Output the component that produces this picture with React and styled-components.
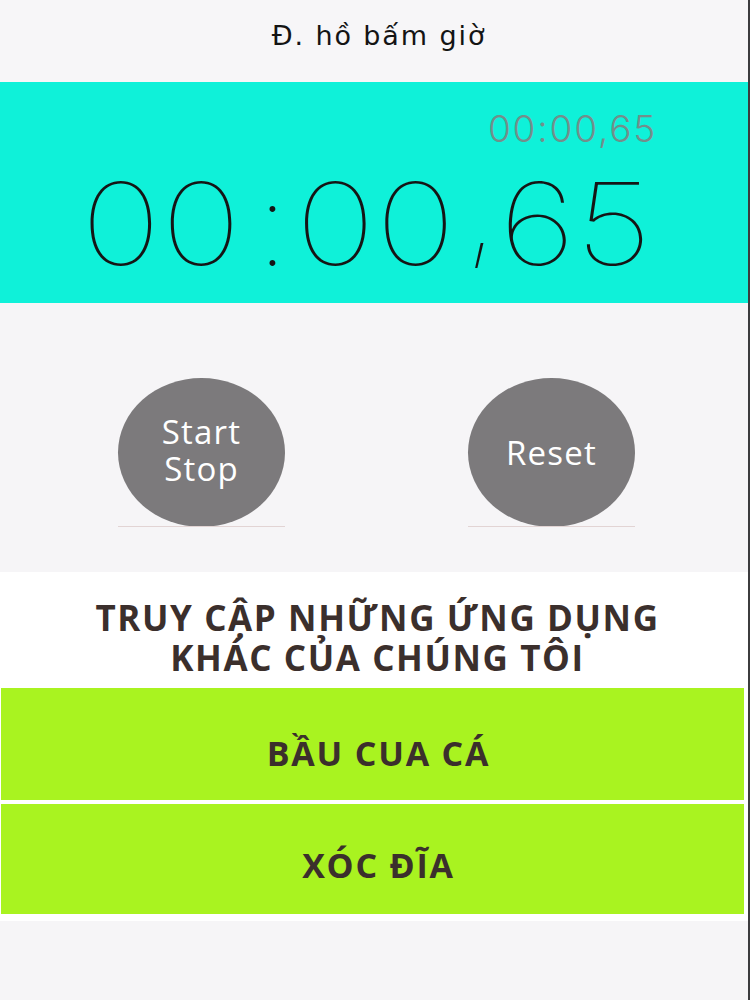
import styled, { createGlobalStyle } from "styled-components";

const GlobalStyle = createGlobalStyle`
  html, body {
    margin: 0;
    padding: 0;
    background: #f6f5f7;
  }
  body {
    font-family: "Open Sans", "Liberation Sans", sans-serif;
  }
`;

const Screen = styled.div`
  width: 750px;
  min-height: 1000px;
  box-sizing: border-box;
  border-right: 2px solid #3c3c3e;
  background: #f6f5f7;
  display: flex;
  flex-direction: column;
`;

const TopBar = styled.header`
  height: 82px;
  box-sizing: border-box;
  padding: 22px 0 0 10px;
  background: #f7f6f8;
  text-align: center;
`;

const Title = styled.h1`
  margin: 0;
  font-family: "DejaVu Sans", sans-serif;
  font-weight: 400;
  font-size: 27px;
  line-height: 1;
  letter-spacing: 1.9px;
  color: #141414;
`;

const TimerPanel = styled.section`
  height: 221px;
  box-sizing: border-box;
  padding: 28px 91px 0 0;
  background: #0ff1d9;
  display: flex;
  flex-direction: column;
`;

const LapTime = styled.div`
  align-self: flex-end;
  font-family: "Inter", "Roboto", sans-serif;
  font-weight: 300;
  font-size: 37px;
  line-height: 1;
  letter-spacing: 1.8px;
  color: #728f8b;
`;

const BigTime = styled.div`
  display: flex;
  align-items: baseline;
  margin-top: 20px;
  padding-left: 88px;
  font-family: "Inter", "Roboto", sans-serif;
  font-weight: 100;
  font-size: 114px;
  line-height: 1;
  color: #151515;
`;

/* the reference digits are wider than Inter's, so each group is stretched in its own box */
const Digits = styled.span`
  display: inline-block;
  width: ${(p) => p.$w}px;
  text-align: center;
  white-space: nowrap;
  transform: scaleX(1.19);
  transform-origin: center;
`;

const Sep = styled.span`
  display: inline-block;
  margin: 0 ${(p) => p.$after}px 0 ${(p) => p.$before}px;
  transform: translateY(${(p) => p.$rise || 0}px);
`;

const Controls = styled.section`
  height: 269px;
  box-sizing: border-box;
  padding: 75px 113px 0 118px;
  display: flex;
  justify-content: space-between;
  align-items: flex-start;
`;

const ButtonSlot = styled.div`
  width: 167px;
  display: flex;
  flex-direction: column;
`;

const RoundButton = styled.button`
  width: 167px;
  height: 149px;
  border: none;
  border-radius: 50%;
  padding: 0 0 ${(p) => p.$lift || 0}px;
  background: #7c7a7c;
  color: #ffffff;
  font-family: "Open Sans", sans-serif;
  font-size: 33px;
  line-height: 37px;
  letter-spacing: 1.2px;
  display: flex;
  flex-direction: column;
  align-items: center;
  justify-content: center;
`;

const Underline = styled.div`
  height: 1px;
  margin-top: -1px;
  background: #e2d4d4;
`;

const Promo = styled.section`
  background: #ffffff;
  padding: 26px 4px 7px 1px;
  display: flex;
  flex-direction: column;
`;

const PromoHeading = styled.h2`
  margin: 0 0 10px;
  padding-left: 10px;
  font-family: "Open Sans", sans-serif;
  font-weight: 700;
  font-size: 35px;
  line-height: 40px;
  letter-spacing: 1.6px;
  text-align: center;
  color: #3b2f2c;
`;

const AppLinks = styled.div`
  display: flex;
  flex-direction: column;
  gap: 4px;
`;

const AppLink = styled.a`
  display: block;
  height: ${(p) => p.$h}px;
  box-sizing: border-box;
  padding: ${(p) => p.$pad}px 0 0 12px;
  background: #a9f320;
  font-family: "Open Sans", sans-serif;
  font-weight: 700;
  font-size: 34px;
  line-height: 1;
  letter-spacing: 1.8px;
  text-align: center;
  text-decoration: none;
  color: #3b2f2c;
`;

export default function App() {
  return (
    <Screen>
      <GlobalStyle />
      <TopBar>
        <Title>Đ. hồ bấm giờ</Title>
      </TopBar>

      <TimerPanel>
        <LapTime>00:00,65</LapTime>
        <BigTime>
          <Digits $w={146}>00</Digits>
          <Sep $before={23} $after={17}>:</Sep>
          <Digits $w={141}>00</Digits>
          <Sep $before={20} $after={8} $rise={-14}>,</Sep>
          <Digits $w={141}>65</Digits>
        </BigTime>
      </TimerPanel>

      <Controls>
        <ButtonSlot>
          <RoundButton $lift={6}>
            <span>Start</span>
            <span>Stop</span>
          </RoundButton>
          <Underline />
        </ButtonSlot>
        <ButtonSlot>
          <RoundButton>Reset</RoundButton>
          <Underline />
        </ButtonSlot>
      </Controls>

      <Promo>
        <PromoHeading>
          TRUY CẬP NHỮNG ỨNG DỤNG
          <br />
          KHÁC CỦA CHÚNG TÔI
        </PromoHeading>
        <AppLinks>
          <AppLink href="#" $h={112} $pad={48}>
            BẦU CUA CÁ
          </AppLink>
          <AppLink href="#" $h={110} $pad={44}>
            XÓC ĐĨA
          </AppLink>
        </AppLinks>
      </Promo>
    </Screen>
  );
}
